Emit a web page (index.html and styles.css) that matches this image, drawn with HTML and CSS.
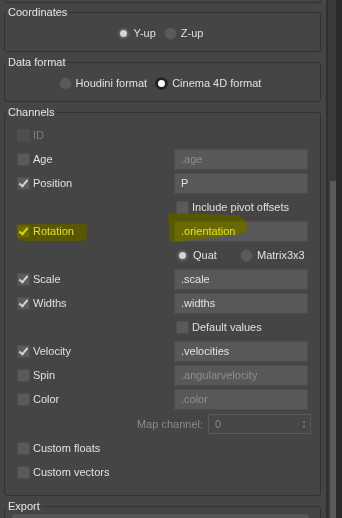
FILE: index.html
```html
<!DOCTYPE html>
<html lang="en">
<head>
    <meta charset="UTF-8">
    <meta name="viewport" content="width=device-width, initial-scale=1.0">
    <title>Alembic Export - Channels</title>
    <link rel="stylesheet" href="styles.css">
</head>
<body>
    <div class="panel">
        <div class="main">
            <div class="group-end"></div>

            <fieldset class="group">
                <legend>Coordinates</legend>
                <div class="radio-row">
                    <label class="radio"><span class="dot on"></span>Y-up</label>
                    <label class="radio"><span class="dot"></span>Z-up</label>
                </div>
            </fieldset>

            <fieldset class="group">
                <legend>Data format</legend>
                <div class="radio-row">
                    <label class="radio"><span class="dot"></span>Houdini format</label>
                    <label class="radio"><span class="dot on strong"></span>Cinema 4D format</label>
                </div>
            </fieldset>

            <fieldset class="group">
                <legend>Channels</legend>
                <div class="channels">
                    <div class="row">
                        <label class="check disabled"><span class="box"></span>ID</label>
                        <span></span>
                    </div>
                    <div class="row">
                        <label class="check"><span class="box"></span>Age</label>
                        <div class="field disabled">.age</div>
                    </div>
                    <div class="row">
                        <label class="check"><span class="box on"></span>Position</label>
                        <div class="field">P</div>
                    </div>
                    <div class="row">
                        <span></span>
                        <label class="check sub"><span class="box"></span>Include pivot offsets</label>
                    </div>
                    <div class="row">
                        <label class="check"><span class="box on"></span>Rotation</label>
                        <div class="field">.orientation</div>
                    </div>
                    <div class="row">
                        <span></span>
                        <div class="sub-radios">
                            <label class="radio quat"><span class="dot on"></span>Quat</label>
                            <label class="radio"><span class="dot"></span>Matrix3x3</label>
                        </div>
                    </div>
                    <div class="row">
                        <label class="check"><span class="box on"></span>Scale</label>
                        <div class="field">.scale</div>
                    </div>
                    <div class="row">
                        <label class="check"><span class="box on"></span>Widths</label>
                        <div class="field">.widths</div>
                    </div>
                    <div class="row">
                        <span></span>
                        <label class="check sub"><span class="box"></span>Default values</label>
                    </div>
                    <div class="row">
                        <label class="check"><span class="box on"></span>Velocity</label>
                        <div class="field">.velocities</div>
                    </div>
                    <div class="row">
                        <label class="check"><span class="box"></span>Spin</label>
                        <div class="field disabled">.angularvelocity</div>
                    </div>
                    <div class="row">
                        <label class="check"><span class="box"></span>Color</label>
                        <div class="field disabled">.color</div>
                    </div>
                    <div class="map-row">
                        <span class="map-label">Map channel:</span>
                        <div class="spinner">
                            <span>0</span>
                            <span class="arrows">&#9650;<br>&#9660;</span>
                        </div>
                    </div>
                    <div class="row">
                        <label class="check"><span class="box"></span>Custom floats</label>
                        <span></span>
                    </div>
                    <div class="row">
                        <label class="check"><span class="box"></span>Custom vectors</label>
                        <span></span>
                    </div>
                </div>
            </fieldset>

            <fieldset class="group">
                <legend>Export</legend>
                <div class="export-bar"></div>
            </fieldset>
        </div>

        <div class="scrollbar">
            <div class="track"><div class="thumb"></div></div>
        </div>

        <!-- marker highlights drawn over the screenshot -->
        <div class="mark mark-rotation"></div>
        <div class="mark lift mark-rotation"></div>
        <div class="mark mark-orient"></div>
        <div class="mark lift mark-orient"></div>
    </div>
</body>
</html>
```

FILE: styles.css
```css
html, body {
    margin: 0;
    height: 518px;
    overflow: hidden;
    background-color: #454545;
}

body {
    font-family: "Liberation Sans", Arial, sans-serif;
    font-size: 11px;
    color: #e0e0e0;
}

.panel {
    position: relative;
    display: flex;
    height: 518px;
    overflow: hidden;
}

.main {
    width: 326px;
    flex: none;
}

.group-end {
    width: 317px;
    height: 3px;
    box-sizing: border-box;
    margin: 0 0 1px 4px;
    border: 1px solid #323232;
    border-top: none;
    border-radius: 0 0 3px 3px;
}

.group {
    width: 317px;
    box-sizing: border-box;
    margin: 0 0 2px 4px;
    padding: 0;
    border: 1px solid #323232;
    border-radius: 3px;
    min-inline-size: 0;
}

.group legend {
    margin-left: 1px;
    padding: 0 2px;
    line-height: 16px;
    font-size: 11px;
    color: #e6e6e6;
}

.radio-row {
    display: flex;
    justify-content: center;
    align-items: center;
    gap: 8px;
    height: 16px;
    padding: 5px 5px 10px 0;
}

.radio {
    display: flex;
    align-items: center;
    gap: 4px;
    white-space: nowrap;
}

.dot {
    width: 13px;
    height: 13px;
    box-sizing: border-box;
    border-radius: 50%;
    background-color: #5a5a5a;
    border: 1px solid #4c4c4c;
    display: flex;
    align-items: center;
    justify-content: center;
}

.dot.on::after {
    content: "";
    width: 7px;
    height: 7px;
    border-radius: 50%;
    background-color: #d4d4d4;
}

.dot.strong {
    background-color: #1f1f1f;
    border-color: #2a2a2a;
}

.dot.strong::after {
    background-color: #ffffff;
}

.channels {
    padding: 3px 12px 11px 12px;
}

.row {
    display: grid;
    grid-template-columns: 157px 134px;
    align-items: center;
    height: 24px;
}

.check {
    display: flex;
    align-items: center;
    gap: 3px;
    white-space: nowrap;
}

.check.sub {
    margin-left: 2px;
}

.check.disabled {
    color: #7c7c7c;
}

.box {
    width: 13px;
    height: 13px;
    box-sizing: border-box;
    background-color: #5a5a5a;
    border: 1px solid #4e4e4e;
    display: flex;
    align-items: center;
    justify-content: center;
}

.check.disabled .box {
    background-color: #4e4e4e;
}

.box.on::after {
    content: "";
    width: 7px;
    height: 3px;
    margin-top: -2px;
    border-left: 2px solid #d4d4d4;
    border-bottom: 2px solid #d4d4d4;
    transform: rotate(-50deg);
}

.field {
    height: 21px;
    box-sizing: border-box;
    line-height: 19px;
    padding-left: 6px;
    background-color: #585858;
    border: 1px solid #4d4d4d;
    color: #e2e2e2;
    white-space: nowrap;
    overflow: hidden;
}

.field.disabled {
    color: #8e8e8e;
}

.sub-radios {
    display: flex;
    align-items: center;
    margin-left: 2px;
}

.radio.quat {
    width: 64px;
}

.map-row {
    display: flex;
    justify-content: flex-end;
    align-items: center;
    gap: 5px;
    height: 25px;
    margin-right: -3px;
    color: #8a8a8a;
}

.spinner {
    width: 103px;
    height: 20px;
    box-sizing: border-box;
    display: flex;
    align-items: center;
    justify-content: space-between;
    padding: 0 4px 0 6px;
    background-color: #474747;
    border: 1px solid #5a5a5a;
}

.arrows {
    font-size: 4px;
    line-height: 5px;
    color: #8a8a8a;
    text-align: center;
}

.export-bar {
    height: 10px;
    margin: 0 11px 0 7px;
    background-color: #575757;
    border-radius: 3px 3px 0 0;
}

.scrollbar {
    flex: 1;
    display: flex;
    border-left: 2px solid #303030;
    background-color: #2b2b2b;
}

.track {
    width: 8px;
    box-sizing: border-box;
    padding: 181px 0 0 2px;
    background-color: #3a3a3a;
}

.thumb {
    width: 6px;
    height: 400px;
    background-color: #5a5a5a;
}

.mark {
    position: absolute;
    background-color: #ffff00;
    mix-blend-mode: multiply;
    pointer-events: none;
}

.mark.lift {
    background-color: #1a1a00;
    mix-blend-mode: screen;
}

.mark-rotation {
    left: 17px;
    top: 224px;
    width: 70px;
    height: 17px;
    border-radius: 3px 2px 5px 6px;
}

.mark-orient {
    left: 168px;
    top: 213px;
    width: 79px;
    height: 29px;
    clip-path: polygon(0 0, 88% 8%, 100% 30%, 100% 62%, 90% 72%, 10% 100%, 2% 96%);
}
```
